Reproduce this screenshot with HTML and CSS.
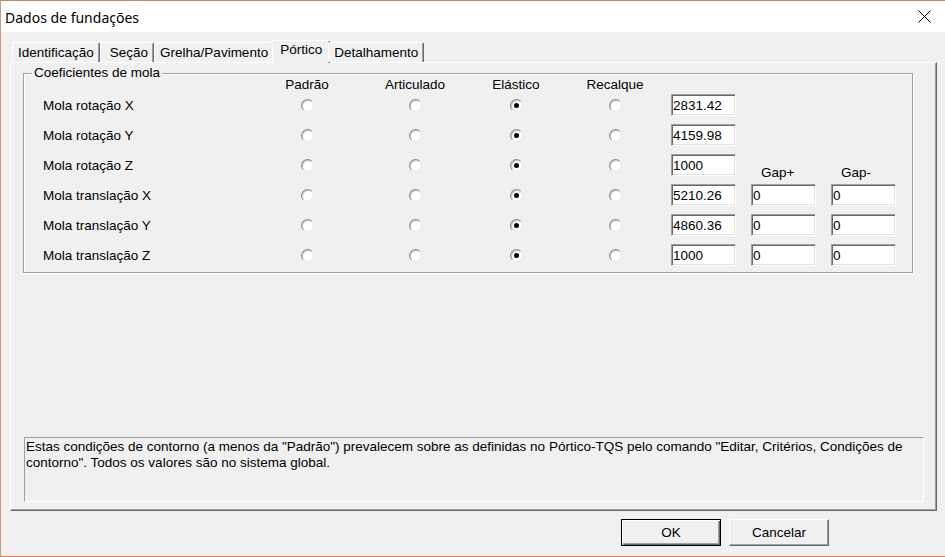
FILE: index.html
```html
<!DOCTYPE html>
<html lang="pt-BR">
<head>
    <meta charset="UTF-8">
    <title>Dados de fundações</title>
    <link rel="stylesheet" href="styles.css">
</head>
<body>
    <div class="window">
        <div class="titlebar">
            <span class="title">Dados de fundações</span>
            <svg class="close" width="13" height="13" viewBox="0 0 13 13">
                <path d="M0.5 0.5 L12.5 12.5 M12.5 0.5 L0.5 12.5" stroke="#000" stroke-width="1" fill="none"/>
            </svg>
        </div>

        <div class="client">
            <div class="tabs">
                <div class="tab tab-first">Identificação</div>
                <div class="tab tab-secao">Seção</div>
                <div class="tab">Grelha/Pavimento</div>
                <div class="tab active">Pórtico</div>
                <div class="tab">Detalhamento</div>
            </div>

            <div class="panel">
                <fieldset class="group">
                    <legend>Coeficientes de mola</legend>
                    <div class="grid">
                        <div class="head col-1">Padrão</div>
                        <div class="head">Articulado</div>
                        <div class="head">Elástico</div>
                        <div class="head">Recalque</div>

                        <div class="label">Mola rotação X</div>
                        <div class="cell"><span class="radio"></span></div>
                        <div class="cell"><span class="radio"></span></div>
                        <div class="cell"><span class="radio checked"></span></div>
                        <div class="cell"><span class="radio"></span></div>
                        <div class="field"><input class="edit" type="text" value="2831.42"></div>

                        <div class="label">Mola rotação Y</div>
                        <div class="cell"><span class="radio"></span></div>
                        <div class="cell"><span class="radio"></span></div>
                        <div class="cell"><span class="radio checked"></span></div>
                        <div class="cell"><span class="radio"></span></div>
                        <div class="field"><input class="edit" type="text" value="4159.98"></div>

                        <div class="label">Mola rotação Z</div>
                        <div class="cell"><span class="radio"></span></div>
                        <div class="cell"><span class="radio"></span></div>
                        <div class="cell"><span class="radio checked"></span></div>
                        <div class="cell"><span class="radio"></span></div>
                        <div class="field"><input class="edit" type="text" value="1000"></div>
                        <div class="gap-label">Gap+</div>
                        <div class="gap-label">Gap-</div>

                        <div class="label">Mola translação X</div>
                        <div class="cell"><span class="radio"></span></div>
                        <div class="cell"><span class="radio"></span></div>
                        <div class="cell"><span class="radio checked"></span></div>
                        <div class="cell"><span class="radio"></span></div>
                        <div class="field"><input class="edit" type="text" value="5210.26"></div>
                        <div class="field"><input class="edit" type="text" value="0"></div>
                        <div class="field"><input class="edit" type="text" value="0"></div>

                        <div class="label">Mola translação Y</div>
                        <div class="cell"><span class="radio"></span></div>
                        <div class="cell"><span class="radio"></span></div>
                        <div class="cell"><span class="radio checked"></span></div>
                        <div class="cell"><span class="radio"></span></div>
                        <div class="field"><input class="edit" type="text" value="4860.36"></div>
                        <div class="field"><input class="edit" type="text" value="0"></div>
                        <div class="field"><input class="edit" type="text" value="0"></div>

                        <div class="label">Mola translação Z</div>
                        <div class="cell"><span class="radio"></span></div>
                        <div class="cell"><span class="radio"></span></div>
                        <div class="cell"><span class="radio checked"></span></div>
                        <div class="cell"><span class="radio"></span></div>
                        <div class="field"><input class="edit" type="text" value="1000"></div>
                        <div class="field"><input class="edit" type="text" value="0"></div>
                        <div class="field"><input class="edit" type="text" value="0"></div>
                    </div>
                </fieldset>

                <div class="note">Estas condições de contorno (a menos da "Padrão") prevalecem sobre as definidas no Pórtico-TQS pelo comando "Editar, Critérios, Condições de contorno". Todos os valores são no sistema global.</div>
            </div>

            <div class="buttons">
                <button class="btn default">OK</button>
                <button class="btn">Cancelar</button>
            </div>
        </div>
    </div>
</body>
</html>
```

FILE: styles.css
```css
body {
    margin: 0;
    background-color: #f0f0f0;
    font-family: "Liberation Sans", Arial, sans-serif;
    font-size: 13.5px;
    color: #000;
}
.window {
    width: 945px;
    height: 557px;
    box-sizing: border-box;
    border-top: 1px solid #b98a6c;
    border-left: 1px solid #c49c82;
    border-bottom: 1px solid #e07b74;
    background-color: #f0f0f0;
    display: flex;
    flex-direction: column;
}
.titlebar {
    height: 31px;
    flex: none;
    background-color: #fff;
    display: flex;
    align-items: center;
    justify-content: space-between;
    padding-left: 4px;
}
.title {
    font-family: "Noto Sans", "Open Sans", sans-serif;
    font-size: 14px;
    padding-top: 1px;
}
.close {
    margin-right: 14px;
}
.client {
    flex: 1;
    padding: 8px 8px 0 9px;
}

/* abas */
.tabs {
    display: flex;
    height: 22px;
    padding-left: 2px;
    position: relative;
    z-index: 1;
}
.tab {
    height: 20px;
    margin-top: 2px;
    box-sizing: border-box;
    padding: 0 5px 0 5px;
    line-height: 19px;
    border-top: 1px solid #fff;
    border-left: 1px solid #fff;
    border-right: 1px solid #696969;
    border-radius: 2px 2px 0 0;
    box-shadow: inset -1px 0 0 #a0a0a0;
    background-color: #f0f0f0;
}
.tab-secao {
    min-width: 54px;
    padding-left: 9px;
}
.tab.active {
    height: 23px;
    margin: 0 -2px 0 -2px;
    padding: 0 7px;
    line-height: 18px;
}

/* painel da aba */
.panel {
    height: 449px;
    box-sizing: border-box;
    border-top: 1px solid #fff;
    border-left: 1px solid #fff;
    border-right: 1px solid #696969;
    border-bottom: 1px solid #696969;
    box-shadow: inset -1px -1px 0 #a0a0a0;
    display: flex;
    flex-direction: column;
}
.group {
    margin: 3px 23px 0 12px;
    padding: 0 8px 2px 8px;
    border: 1px solid #a0a0a0;
    box-shadow: 1px 1px 0 #fff, inset 1px 1px 0 #fff;
    min-width: 0;
}
.group legend {
    padding: 0 2px;
    line-height: 14px;
    background-color: #f0f0f0;
}
.grid {
    margin-left: 11px;
    display: grid;
    grid-template-columns: 214px 100px 116px 86px 112px 80px 80px 65px;
    grid-template-rows: 10px repeat(6, 30px);
    align-items: center;
}
.head {
    text-align: center;
    line-height: 8px;
}
.col-1 {
    grid-column: 2;
}
.label {
    grid-column: 1;
}
.cell {
    display: flex;
    justify-content: center;
}
.radio {
    width: 13px;
    height: 13px;
    box-sizing: border-box;
    border-radius: 50%;
    border: 1px solid;
    border-color: #8c8c8c #e6e6e6 #e6e6e6 #8c8c8c;
    box-shadow: inset 1px 1px 0 #c4c4c4;
    background-color: #fff;
    display: flex;
    align-items: center;
    justify-content: center;
}
.radio.checked::after {
    content: "";
    width: 5px;
    height: 5px;
    border-radius: 50%;
    background-color: #000;
}
.edit {
    width: 65px;
    height: 22px;
    box-sizing: border-box;
    margin: 0;
    padding: 0 1px;
    font-family: "Liberation Sans", Arial, sans-serif;
    font-size: 13.5px;
    color: #000;
    background-color: #fff;
    border: 1px solid;
    border-color: #a0a0a0 #fff #fff #a0a0a0;
    box-shadow: inset 1px 1px 0 #696969, inset -1px -1px 0 #e3e3e3;
    outline: none;
}
.gap-label {
    align-self: end;
    line-height: 14px;
    padding-left: 10px;
}
.note {
    margin: auto 12px 8px 13px;
    height: 65px;
    box-sizing: border-box;
    padding: 1px 4px 0 1px;
    line-height: 16px;
    border-top: 1px solid #a0a0a0;
    border-left: 1px solid #a0a0a0;
    border-right: 1px solid #fff;
    border-bottom: 1px solid #fff;
}

/* botões */
.buttons {
    display: flex;
    justify-content: flex-end;
    gap: 8px;
    margin-top: 8px;
    padding-right: 108px;
}
.btn {
    width: 100px;
    height: 27px;
    padding: 0;
    font-family: "Liberation Sans", Arial, sans-serif;
    font-size: 13.5px;
    color: #000;
    background-color: #f0f0f0;
    border-top: 1px solid #fff;
    border-left: 1px solid #fff;
    border-right: 1px solid #696969;
    border-bottom: 1px solid #696969;
    box-shadow: inset -1px -1px 0 #a0a0a0;
}
.btn.default {
    border: 1px solid #000;
    box-shadow: inset 1px 1px 0 #fff, inset -1px -1px 0 #696969, inset -2px -2px 0 #a0a0a0;
}
```
